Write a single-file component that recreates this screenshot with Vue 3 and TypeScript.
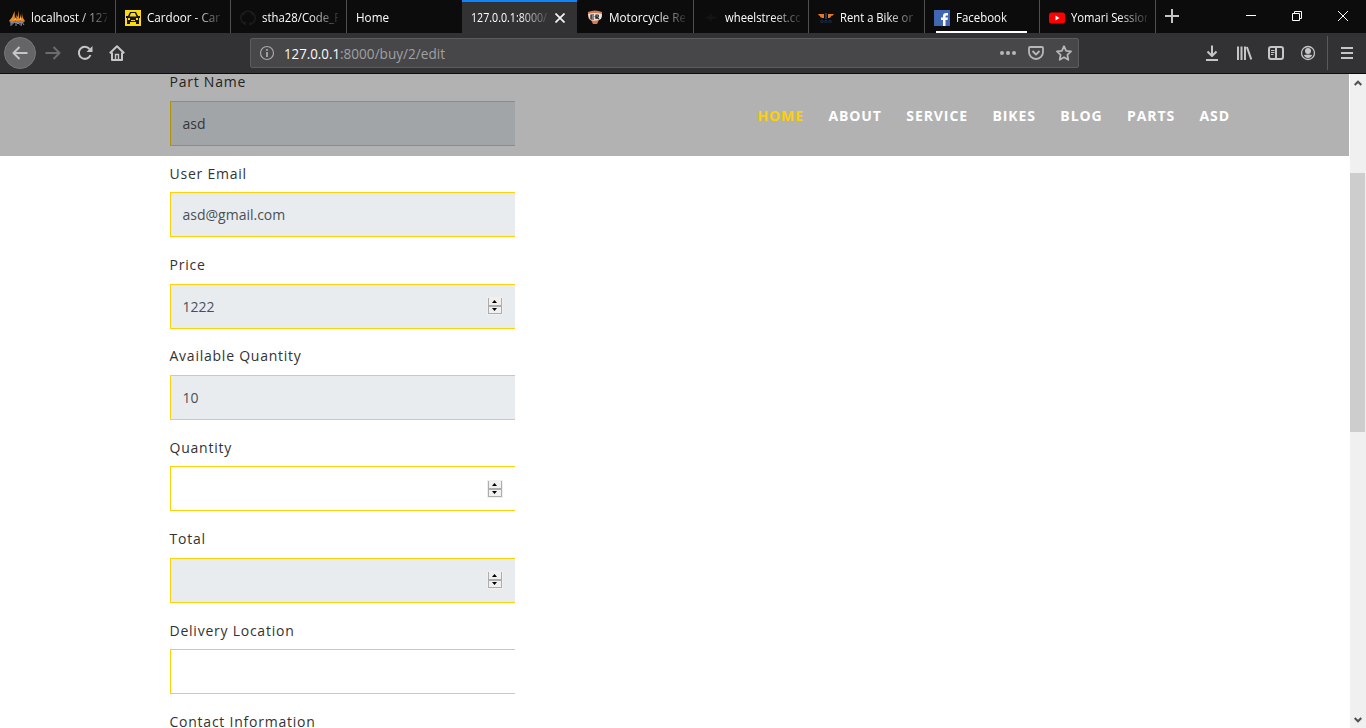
<script setup lang="ts">
interface Tab {
  title: string
  icon?: string
  active?: boolean
  width: number
}
interface Field {
  label: string
  value: string
  disabled: boolean
  spinner: boolean
}

// width: rendered length of each tab title in pixels
const tabs: Tab[] = [
  { title: 'localhost / 127', icon: 'pma', width: 78 },
  { title: 'Cardoor - Car', icon: 'car', width: 73 },
  { title: 'stha28/Code_P', icon: 'github', width: 79 },
  { title: 'Home', width: 33 },
  { title: '127.0.0.1:8000/', active: true, width: 76 },
  { title: 'Motorcycle Re', icon: 'er', width: 77 },
  { title: 'wheelstreet.co', icon: 'wheel', width: 77 },
  { title: 'Rent a Bike or', icon: 'wings', width: 73 },
  { title: 'Facebook', icon: 'fb', width: 51 },
  { title: 'Yomari Session', icon: 'yt', width: 80 },
]

const links: string[] = ['HOME', 'ABOUT', 'SERVICE', 'BIKES', 'BLOG', 'PARTS', 'ASD']

const fields: Field[] = [
  { label: 'Part Name', value: 'asd', disabled: true, spinner: false },
  { label: 'User Email', value: 'asd@gmail.com', disabled: true, spinner: false },
  { label: 'Price', value: '1222', disabled: true, spinner: true },
  { label: 'Available Quantity', value: '10', disabled: true, spinner: false },
  { label: 'Quantity', value: '', disabled: false, spinner: true },
  { label: 'Total', value: '', disabled: true, spinner: true },
  { label: 'Delivery Location', value: '', disabled: false, spinner: false },
  { label: 'Contact Information', value: '', disabled: false, spinner: false },
]
</script>

<template>
  <div class="window">
    <div class="tabstrip">
      <div class="tabs">
        <div v-for="t in tabs" :key="t.title" class="tab" :class="{ active: t.active }">
          <svg v-if="t.icon" class="fav" width="16" height="16" viewBox="0 0 16 16">
            <g v-if="t.icon === 'pma'">
              <path d="M5.500 1 6 11H0Q4 7 5.500 1M10 0Q9 6 11 11H6Q9.500 6 10 0M13 2Q13 8 16 11H11Q13.500 7 13 2" fill="#e98a23" />
              <path d="M8 4 7 10H4.500Q7 8 8 4M12 4V10H9.500Q11.500 8 12 4" fill="#f7b45c" />
              <path d="M0 11H16L14 13H2Z" fill="#777a91" />
              <path d="M2 12V16M2 12H4V14H2M7 16V12L9 14 11 12V15M12 16 13 12 15 15" fill="none" stroke="#8b8ea8" />
            </g>
            <g v-else-if="t.icon === 'car'">
              <path d="M0 0H16V16H0Z" fill="#fbd914" />
              <path d="M5 2H11L13 6H15V8H14V14H11V12H5V14H2V8H1V6H3Z" fill="#151304" />
              <path d="M6 3H10L11.500 6.500H4.500ZM3 8H5V10H3ZM11 8H13V10H11ZM6 10H10V11H6Z" fill="#fbd914" />
            </g>
            <path v-else-if="t.icon === 'github'" d="M6 14.500Q2 13 1 9.500Q0 5 4 2.500Q8 0 12 2.500Q16 5 15 9.500Q14 13 10 14.500V12.500M4 5V3M12 5V3M4 12 6 13" fill="none" stroke="#1b1c1e" stroke-width="1.500" />
            <g v-else-if="t.icon === 'er'">
              <path d="M1 2Q8-1 15 2V7Q14 9 12 10L10 14H6L4 10Q1 9 1 6Z" fill="#d8784c" />
              <path d="M1 4Q8 2 15 4L14 9Q8 12 3 10Z" fill="#e9e5e2" />
              <path d="M7 5H4V9H7M4 7H7M9 9V5H11Q12 6 11 7H9L12 9" fill="none" stroke="#222" stroke-width="1.200" />
            </g>
            <path v-else-if="t.icon === 'wheel'" d="M1 8 6 6 8 3 9 6 15 8 9 9 8 12 6 9Z" fill="#131416" />
            <g v-else-if="t.icon === 'wings'">
              <path d="M0 4H6V8Q2 8 2 6Q1 6 0 4M10 4H16Q15 6 13 6Q13 8 10 8Z" fill="#e77720" />
              <path d="M7 3H9V9H7Z" fill="#20385a" />
              <path d="M3 10.500H5V12.500H3ZM7 13V10.500H9V13M11 13V10.500H13V13" fill="none" stroke="#192b48" />
            </g>
            <g v-else-if="t.icon === 'fb'">
              <path d="M0 0H16V16H0Z" fill="#4267b2" />
              <path d="M9 16V10H7V7.500H9V6Q9 3 12 3H14V5.500H12.500Q11.500 5.500 11.500 6.500V7.500H14L13.500 10H11.500V16Z" fill="#fff" />
            </g>
            <g v-else>
              <rect y="2.500" width="16" height="11" rx="2.500" fill="#f00" />
              <path d="M6.500 5.500 10.500 8 6.500 10.500Z" fill="#fff" />
            </g>
          </svg>
          <div class="title">
            <svg class="title-svg" width="90" height="20"><text x="0" y="14" :textLength="t.width" lengthAdjust="spacingAndGlyphs">{{ t.title }}</text></svg>
          </div>
          <svg v-if="t.active" class="close" width="10" height="10" viewBox="0 0 10 10"><path d="M.5.5 9.500 9.500M9.500.5.5 9.500" stroke="#f5f5f5" stroke-width="1.700" /></svg>
          <span v-if="t.icon === 'fb'" class="attention"></span>
        </div>
      </div>
      <svg class="plus" width="14" height="14" viewBox="0 0 14 14"><path d="M7 0V14M0 7H14" stroke="#c4c4c5" stroke-width="2" /></svg>
      <div class="controls">
        <svg width="12" height="12" viewBox="0 0 12 12"><path d="M1 5.500H11" stroke="#fff" /></svg>
        <svg width="12" height="12" viewBox="0 0 12 12"><path d="M1.500 3.500H8.500V10.500H1.500ZM3.500 3.500V1.500H10.500V8.500H8.500" fill="none" stroke="#fff" /></svg>
        <svg width="12" height="12" viewBox="0 0 12 12"><path d="M1 1 11 11M11 1 1 11" stroke="#fff" /></svg>
      </div>
    </div>

    <div class="toolbar">
      <div class="nav-buttons">
        <span class="back">
          <svg width="16" height="16" viewBox="0 0 16 16"><path d="M15.500 8H1.500M7.500 2 1.500 8 7.500 14" class="ico" /></svg>
        </span>
        <svg width="16" height="16" viewBox="0 0 16 16"><path d="M.5 8H14.500M8.500 2 14.500 8 8.500 14" class="ico dim" /></svg>
        <svg width="16" height="16" viewBox="0 0 16 16"><path d="M13.500 10A6 6 0 1 1 12.500 4" class="ico" /><path d="M15.500 1V7H9.500Z" fill="#c6c6c7" /></svg>
        <svg width="16" height="16" viewBox="0 0 16 16"><path d="M.8 8.300 8 1.200 15.200 8.300M3 7.500V15H13V7.500" class="ico" /><path d="M6.500 14V9.500H9.500V14" fill="none" stroke="#c6c6c7" stroke-width="1.400" /></svg>
      </div>
      <div class="urlbar">
        <svg width="16" height="16" viewBox="0 0 16 16"><circle cx="8" cy="8" r="6.500" fill="none" stroke="#a8a8aa" stroke-width="1.200" /><path d="M8 7V12M8 4V5.800" stroke="#a8a8aa" stroke-width="1.800" /></svg>
        <svg class="url" width="180" height="24"><text x="0" y="18" textLength="56" lengthAdjust="spacingAndGlyphs" class="host">127.0.0.1</text><text x="56" y="18" textLength="105" lengthAdjust="spacingAndGlyphs" class="path">:8000/buy/2/edit</text></svg>
        <div class="url-actions">
          <svg width="16" height="16" viewBox="0 0 16 16"><circle cx="2" cy="8" r="2" /><circle cx="8" cy="8" r="2" /><circle cx="14" cy="8" r="2" /></svg>
          <svg width="16" height="16" viewBox="0 0 16 16"><path d="M2 2H14Q15 2 15 3V7A7 7 0 0 1 1 7V3Q1 2 2 2Z" class="ico mid" /><path d="M4.500 6 8 9.500 11.500 6" class="ico mid" /></svg>
          <svg width="16" height="16" viewBox="0 0 16 16"><path d="M8 1.200 10.100 5.800 15 6.400 11.400 9.800 12.300 14.800 8 12.300 3.700 14.800 4.600 9.800 1 6.400 5.900 5.800Z" class="ico mid" /></svg>
        </div>
      </div>
      <div class="tools">
        <svg width="16" height="16" viewBox="0 0 16 16"><path d="M8 .5V11M3.500 6.500 8 11 12.500 6.500M2 15H14" class="ico" /></svg>
        <svg width="16" height="16" viewBox="0 0 16 16"><path d="M2 1.500V15M5.500 1.500V15M9 1.500V15M10.900 2 15.300 14.500" class="ico" /></svg>
        <svg width="16" height="16" viewBox="0 0 16 16"><rect x="1" y="2" width="14" height="12" rx="2" class="ico" /><path d="M8 2V14" class="ico" /><path d="M3 5.500H6.500M3 7.500H6.500M3 9.500H5.500" stroke="#c6c6c7" /></svg>
        <svg width="16" height="16" viewBox="0 0 16 16"><circle cx="8" cy="8" r="6.500" fill="none" stroke="#c6c6c7" stroke-width="1.300" /><circle cx="8" cy="6" r="3" fill="#c6c6c7" /><path d="M3.800 10Q8 9 12.200 10Q11 13 8 13Q5 13 3.800 10" fill="#c6c6c7" /></svg>
      </div>
      <div class="menu">
        <svg width="14" height="14" viewBox="0 0 14 14"><path d="M1 2H13M1 7H13M1 12H13" class="ico" /></svg>
      </div>
    </div>

    <div class="viewport">
      <main class="page">
        <form class="form">
          <div v-for="f in fields" :key="f.label" class="group">
            <label>{{ f.label }}</label>
            <div class="input" :class="{ disabled: f.disabled }">
              <span>{{ f.value }}</span>
              <svg v-if="f.spinner" class="spinner" width="16" height="18" viewBox="0 0 16 18">
                <path d="M0 0H16V18H0Z" fill="#f0f0f0" />
                <path d="M1 1H2V8H14V1H15V17H1ZM2 10V16H14V10Z" fill="#adadad" fill-rule="evenodd" />
                <path d="M5 6 7.500 3 10 6ZM5 11H10L7.500 14Z" fill="#000" />
              </svg>
            </div>
          </div>
        </form>
        <header class="site-header">
          <nav>
            <a v-for="(l, i) in links" :key="l" :class="{ current: i === 0 }">{{ l }}</a>
          </nav>
        </header>
      </main>
      <div class="scrollbar">
        <svg width="8" height="6" viewBox="0 0 8 6"><path d="M.7 5 4 1.700 7.300 5" fill="none" stroke="#505050" stroke-width="2" /></svg>
        <div class="thumb"></div>
        <svg width="8" height="6" viewBox="0 0 8 6"><path d="M.7 1 4 4.300 7.300 1" fill="none" stroke="#505050" stroke-width="2" /></svg>
      </div>
    </div>
  </div>
</template>

<style>
body { margin: 0; overflow: hidden; }
</style>

<style scoped>
.window {
  width: 1366px; height: 728px; overflow: hidden; display: flex; flex-direction: column;
  font-family: "Open Sans", "Noto Sans", sans-serif; background: #fff;
}
svg { display: block; flex: none; }
.ico { fill: none; stroke: #c6c6c7; stroke-width: 2; stroke-linejoin: round; }
.ico.dim { stroke: #6c6c6e; }
.ico.mid { stroke: #b7b7b9; stroke-width: 1.8; }
.tabstrip { height: 33px; flex: none; display: flex; background: #0c0c0d; }
.tabs { width: 1156px; display: grid; grid-template-columns: repeat(10, 1fr); }
.tab {
  position: relative; box-sizing: border-box; min-width: 0; display: flex; align-items: center;
  padding: 2px 9px 0 9px; border-right: 1px solid #505051;
}
.tab:nth-child(4) { border-right-color: transparent; }
.tab.active { background: #323234; border-top: 2px solid #0a84ff; border-right: 0; padding-top: 0; margin-right: .7px; }
.fav { margin-right: 6px; }
.title {
  flex: 1; min-width: 0; height: 20px; margin-right: -1px; overflow: hidden;
  mask-image: linear-gradient(to right, #000 calc(100% - 29px), rgba(0, 0, 0, .12));
}
.title-svg text { font-size: 12px; fill: #fff; }
.close { margin: 0 3px 0 8px; }
.attention { position: absolute; left: 11px; bottom: 0; width: 91px; height: 2px; background: #fff; }
.plus { margin: 9px 0 0 9px; }
.controls { margin: 10px 17px 0 auto; display: flex; gap: 34px; }
.toolbar {
  height: 41px; flex: none; box-sizing: border-box; display: flex; align-items: center;
  background: #323234; border-bottom: 1px solid #0c0c0d;
}
.nav-buttons { width: 250px; box-sizing: border-box; padding-left: 4px; display: flex; align-items: center; gap: 16px; }
.back {
  width: 32px; height: 32px; box-sizing: border-box; border: 1px solid #777778; border-radius: 50%; background: #656567;
  display: flex; align-items: center; justify-content: center; margin-right: -7px;
}
.urlbar {
  width: 829px; height: 30px; box-sizing: border-box; padding: 0 6px 0 8px; display: flex; align-items: center;
  background: #474749; border: 1px solid #5c5c5e; border-radius: 2px;
}
.url { margin-left: 9px; }
.url text { font-size: 14px; }
.url .host { fill: #f9f9fa; }
.url .path { fill: #a0a0a2; }
.url-actions { margin-left: auto; display: flex; gap: 12px; }
.url-actions circle { fill: #b7b7b9; }
.tools { margin-left: auto; display: flex; gap: 16px; }
.menu { height: 34px; margin-left: 11px; padding: 0 12px; border-left: 1px solid #59595b; display: flex; align-items: center; }
.viewport { flex: 1; min-height: 0; display: flex; }
.page { width: 1349px; position: relative; overflow: hidden; background: #fff; }
.form { width: 345.5px; margin: -4px 0 0 169.5px; }
.group { height: 91.36px; }
label {
  display: block; box-sizing: border-box; height: 31px; padding-top: .35px; line-height: 24px;
  font-size: 14px; letter-spacing: .76px; color: #333; white-space: nowrap;
}
.input {
  height: 45px; box-sizing: border-box; display: flex; align-items: center; justify-content: space-between;
  padding: 0 12px; border: 1px solid #fdd209; border-right: 0; font-size: 14px; color: #495057; background: #fff;
}
.input.disabled { background: #e9ecef; }
.spinner { margin-top: -.4px; }
.site-header {
  position: absolute; inset: 0 0 auto 0; height: 82px; display: flex; justify-content: flex-end;
  background: rgba(0, 0, 0, .3);
}
nav { display: flex; gap: 24.5px; margin-right: 119px; height: 82px; align-items: center; }
nav a { font-size: 14px; font-weight: 700; letter-spacing: .9px; color: #fff; }
nav a.current { color: #ffd000; }
.scrollbar {
  width: 16px; box-sizing: border-box; margin-left: 1px; padding: 6px 1px 5px 0; background: #f0f0f0;
  display: flex; flex-direction: column; align-items: center; justify-content: space-between;
}
.thumb { width: 15px; height: 259px; margin: 87px 0 auto; background: #cdcdcd; }
</style>
